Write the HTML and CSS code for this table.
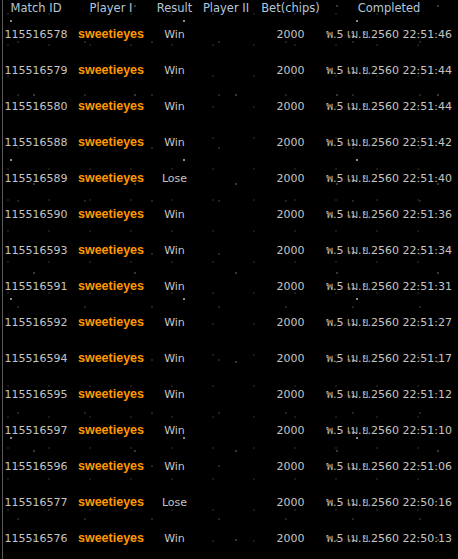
FILE: index.html
```html
<!DOCTYPE html>
<html>
<head>
<meta charset="utf-8">
<link rel="stylesheet" href="styles.css">
</head>
<body>
<div class="panel">
<table class="matches">
<colgroup>
<col class="c-id"><col class="c-p1"><col class="c-res"><col class="c-p2"><col class="c-bet"><col class="c-done">
</colgroup>
<thead>
<tr><th>Match ID</th><th>Player I</th><th>Result</th><th>Player II</th><th>Bet(chips)</th><th>Completed</th></tr>
</thead>
<tbody>
<tr><td>115516578</td><td class="player">sweetieyes</td><td>Win</td><td></td><td>2000</td><td>พ.5 เม.ย.2560 22:51:46</td></tr>
<tr><td>115516579</td><td class="player">sweetieyes</td><td>Win</td><td></td><td>2000</td><td>พ.5 เม.ย.2560 22:51:44</td></tr>
<tr><td>115516580</td><td class="player">sweetieyes</td><td>Win</td><td></td><td>2000</td><td>พ.5 เม.ย.2560 22:51:44</td></tr>
<tr><td>115516588</td><td class="player">sweetieyes</td><td>Win</td><td></td><td>2000</td><td>พ.5 เม.ย.2560 22:51:42</td></tr>
<tr><td>115516589</td><td class="player">sweetieyes</td><td>Lose</td><td></td><td>2000</td><td>พ.5 เม.ย.2560 22:51:40</td></tr>
<tr><td>115516590</td><td class="player">sweetieyes</td><td>Win</td><td></td><td>2000</td><td>พ.5 เม.ย.2560 22:51:36</td></tr>
<tr><td>115516593</td><td class="player">sweetieyes</td><td>Win</td><td></td><td>2000</td><td>พ.5 เม.ย.2560 22:51:34</td></tr>
<tr><td>115516591</td><td class="player">sweetieyes</td><td>Win</td><td></td><td>2000</td><td>พ.5 เม.ย.2560 22:51:31</td></tr>
<tr><td>115516592</td><td class="player">sweetieyes</td><td>Win</td><td></td><td>2000</td><td>พ.5 เม.ย.2560 22:51:27</td></tr>
<tr><td>115516594</td><td class="player">sweetieyes</td><td>Win</td><td></td><td>2000</td><td>พ.5 เม.ย.2560 22:51:17</td></tr>
<tr><td>115516595</td><td class="player">sweetieyes</td><td>Win</td><td></td><td>2000</td><td>พ.5 เม.ย.2560 22:51:12</td></tr>
<tr><td>115516597</td><td class="player">sweetieyes</td><td>Win</td><td></td><td>2000</td><td>พ.5 เม.ย.2560 22:51:10</td></tr>
<tr><td>115516596</td><td class="player">sweetieyes</td><td>Win</td><td></td><td>2000</td><td>พ.5 เม.ย.2560 22:51:06</td></tr>
<tr><td>115516577</td><td class="player">sweetieyes</td><td>Lose</td><td></td><td>2000</td><td>พ.5 เม.ย.2560 22:50:16</td></tr>
<tr><td>115516576</td><td class="player">sweetieyes</td><td>Win</td><td></td><td>2000</td><td>พ.5 เม.ย.2560 22:50:13</td></tr>
</tbody>
</table>
</div>
</body>
</html>
```
FILE: styles.css
```css
html, body {
  margin: 0;
  padding: 0;
  background: #000;
}
body {
  width: 458px;
  height: 559px;
  overflow: hidden;
  background-color: #000;
  background-image:
    radial-gradient(circle at 1px 1px, rgba(255,255,255,0.55) 0.7px, transparent 1.2px),
    radial-gradient(circle at 1px 1px, rgba(255,255,255,0.22) 0.7px, transparent 1.2px),
    radial-gradient(circle at 1px 1px, rgba(255,255,255,0.14) 0.7px, transparent 1.2px),
    radial-gradient(circle at 1px 1px, rgba(255,255,255,0.1) 0.7px, transparent 1.2px);
  background-size: 173px 139px, 101px 89px, 67px 53px, 41px 31px;
  background-position: 10px 20px, 33px 5px, 17px 41px, 7px 13px;
  font-family: "DejaVu Sans", "Liberation Sans", sans-serif;
}
.panel {
  margin-left: 2px;
  border-left: 1px solid #5a5a5a;
  height: 559px;
}
.matches {
  border-collapse: collapse;
  table-layout: fixed;
  width: 450px;
  font-size: 11px;
  color: #c4c4c4;
}
.c-id { width: 66px; }
.c-p1 { width: 84px; }
.c-res { width: 43px; }
.c-p2 { width: 60px; }
.c-bet { width: 69px; }
.c-done { width: 128px; }
.matches th {
  height: 16px;
  padding: 0;
  font-size: 11.5px;
  font-weight: normal;
  color: #b3c6da;
  text-align: center;
  white-space: nowrap;
  vertical-align: middle;
  line-height: 14px;
}
.matches td {
  height: 36px;
  padding: 0;
  text-align: center;
  white-space: nowrap;
  vertical-align: middle;
}
.matches td.player {
  color: #ff9900;
  font-family: "Liberation Sans", "DejaVu Sans", sans-serif;
  font-size: 12.5px;
  font-weight: bold;
}
```
